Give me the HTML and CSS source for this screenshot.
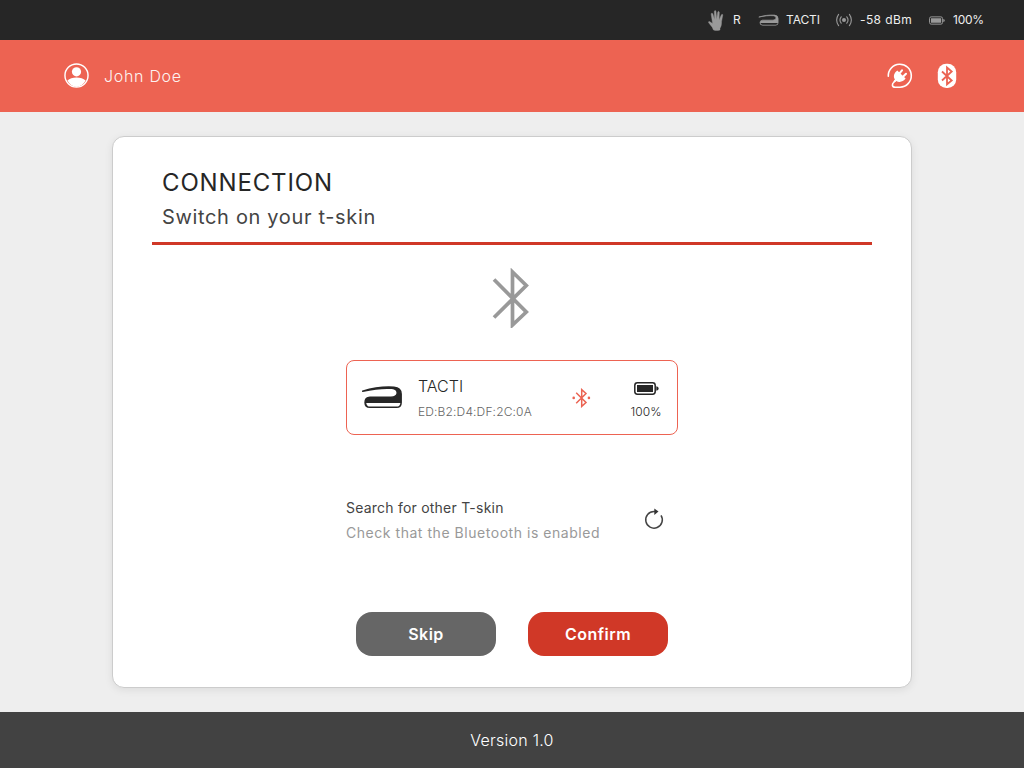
FILE: index.html
```
<!DOCTYPE html>
<html lang="en">
<head>
<meta charset="utf-8">
<title>Connection</title>
<link rel="stylesheet" href="styles.css">
</head>
<body>
<svg class="symbols" aria-hidden="true">
  <symbol id="device" viewBox="0 0 42 24">
    <path d="M1.600 6.200C12 3 23 1.500 33 2.200Q40.200 2.800 40.200 9V17.500Q40.200 22.300 35.500 22.300H9Q4 22.300 4 17.500Q4 12.500 9 12.300H30Q35.800 12 36.200 8Q36.200 4 31 3.400C22 2.600 12 4 1.600 6.200Z" fill="currentColor" stroke="currentColor" stroke-width="1.400" stroke-linejoin="round"/>
    <path class="device-base" d="M5.200 17.900H39.400Q39 21.500 35.500 21.500H9Q5.800 21.500 5.200 17.900Z"/>
  </symbol>
  <symbol id="battery" viewBox="0 0 25 13">
    <rect x=".8" y=".8" width="20.400" height="11.400" rx="2.600" fill="none" stroke="currentColor" stroke-width="1.500"/>
    <path d="M3 3H19V10H3ZM22.300 4.200Q24.700 4.600 24.700 6.500T22.300 8.800Z" fill="currentColor"/>
  </symbol>
</svg>
<div class="app">
  <div class="status">
    <div class="status-item hand">
      <svg width="16" height="21" viewBox="0 0 16 21"><path d="M5.500 20Q4.700 17.200 2.600 15.200L.5 12.600Q.2 11.400 1.500 11.500L4.600 13.500L3.200 4.500Q3 3.300 3.800 3.200T4.900 4.100L6.500 9.600L6.300 1.800Q6.400.6 7.200.6T8 1.700L8.700 9.300L9.700 2.300Q10 1.200 10.700 1.400T11.300 2.600L11.100 9.900L13.300 5Q13.800 4 14.500 4.400T14.700 5.600L13.600 11.300Q13.600 16.500 12 18.200V20Q8.500 21 5.500 20Z" fill="currentColor" stroke="currentColor" stroke-width=".4"/></svg>
      <span class="label">R</span>
    </div>
    <div class="status-item tacti">
      <svg width="21" height="12"><use href="#device"/></svg>
      <span class="label">TACTI</span>
    </div>
    <div class="status-item signal">
      <svg width="16" height="14" viewBox="0 0 16 14" fill="none" stroke="currentColor" stroke-width="1.100" stroke-linecap="round"><circle cx="8" cy="7" r="2" fill="currentColor" stroke="none"/><path d="M5.200 3.800Q2.700 7 5.200 10.200M10.800 3.800Q13.300 7 10.800 10.200M2.600 1.400Q-1.300 7 2.600 12.600M13.400 1.400Q17.300 7 13.400 12.600"/></svg>
      <span class="label">-58 dBm</span>
    </div>
    <div class="status-item charge">
      <svg width="16" height="9"><use href="#battery"/></svg>
      <span class="label">100%</span>
    </div>
  </div>
  <header class="header">
    <svg class="avatar" width="25" height="25" viewBox="0 0 26 26"><circle cx="13" cy="13" r="12" fill="none" stroke="#fff" stroke-width="1.500"/><circle cx="13" cy="9.200" r="4.800" fill="#fff"/><path d="M3.500 18.300Q7 15.200 13 15.200T22.500 18.300Q19 24.800 13 24.800T3.500 18.300Z" fill="#fff"/></svg>
    <span class="user">John Doe</span>
    <svg class="plug" width="26" height="26" viewBox="0 0 26 26"><path d="M1.300 13.300A11.500 11.500 0 1 1 13 24.200H8.200C4.700 24.200 4.700 21 7 19L9 17" fill="none" stroke="#fff" stroke-width="1.600" stroke-linecap="round"/><path d="M10.300 7.500L18.600 15.600C16 19.200 12 19.700 9.200 17.900L7.600 19.500L6.400 18.200L7.900 16.500C6 13.500 6.900 10 10.300 7.500Z" fill="#fff"/><path d="M12.500 10.300L15 7.300M16 13.800L19 10.800" stroke="#fff" stroke-width="2.100" stroke-linecap="round"/></svg>
    <svg width="20" height="26" viewBox="0 0 20 26"><rect x=".8" y=".8" width="18.400" height="24.300" rx="8.500" fill="#fff"/><path d="M5 8.500L14.700 17.500L10 21.300V4.500L14.700 8.500L5 17.500" fill="none" stroke="#eb6352" stroke-width="1.800"/></svg>
  </header>
  <main class="main">
    <section class="card">
      <div class="heading">
        <h1 class="title">CONNECTION</h1>
        <p class="subtitle">Switch on your t-skin</p>
      </div>
      <svg class="bluetooth" width="38" height="60" viewBox="0 0 38 60"><path d="M2 11.500L34.300 44L20.500 57V4L34.300 17.500L2 49.500" fill="none" stroke="#999" stroke-width="3.700"/></svg>
      <div class="device-row">
        <svg class="device-icon" width="42" height="24"><use href="#device"/></svg>
        <div class="device-info">
          <span class="device-name">TACTI</span>
          <span class="device-id">ED:B2:D4:DF:2C:0A</span>
        </div>
        <svg class="paired" width="19" height="20" viewBox="0 0 19 20"><path d="M4.200 4.800L14 14.500L9.700 18.400V1.600L14 5.500L4.200 15.200" fill="none" stroke="#eb6352" stroke-width="1.500"/><circle cx="1.700" cy="9.900" r="1.300" fill="#eb6352"/><circle cx="16.900" cy="9.900" r="1.300" fill="#eb6352"/></svg>
        <div class="level">
          <svg width="25" height="13"><use href="#battery"/></svg>
          <span class="level-text">100%</span>
        </div>
      </div>
      <div class="search">
        <div class="search-text">
          <span class="search-title">Search for other T-skin</span>
          <span class="search-hint">Check that the Bluetooth is enabled</span>
        </div>
        <svg class="refresh" width="20" height="22" viewBox="0 0 20 22"><path d="M17 7.300A8.300 8.300 0 1 1 10 3.500H12" fill="none" stroke="#444" stroke-width="1.500"/><path d="M10.300.4L14.500 3.500L10.300 6.900Z" fill="#333"/></svg>
      </div>
      <div class="actions">
        <button class="button skip"><span>Skip</span></button>
        <button class="button confirm"><span>Confirm</span></button>
      </div>
    </section>
  </main>
  <footer class="footer"><span class="version">Version 1.0</span></footer>
</div>
</body>
</html>
```
FILE: styles.css
```
* { box-sizing: border-box; }
body { margin: 0; font-family: Inter, "Open Sans", sans-serif; }
svg { display: block; flex: none; }
span, h1, p { white-space: nowrap; }
.symbols { position: absolute; width: 0; height: 0; }
.app { width: 1024px; height: 768px; display: flex; flex-direction: column; background: #eee; }
.status { --base: #262626; height: 40px; background: #262626; color: #999; display: flex; align-items: center; padding-left: 708px; }
.status-item { display: flex; align-items: center; height: 40px; }
.label { color: #eee; font-size: 12px; line-height: 16px; }
.hand { width: 50px; gap: 9px; }
.tacti { width: 78px; gap: 7px; }
.signal { width: 93px; gap: 8px; }
.charge { gap: 8px; }
.device-base { fill: var(--base, #fff); }
.tacti .label { letter-spacing: -0.1px; }
.signal .label { letter-spacing: 0.4px; }
.charge .label { letter-spacing: -0.25px; }
.header { height: 72px; background: #ed6352; display: flex; align-items: center; padding: 0 67px 0 64px; }
.avatar { margin-top: -1px; }
.user { margin-left: 15px; color: #fff; font-size: 16px; font-weight: 300; letter-spacing: 0.7px; flex: 1; opacity: .92; }
.plug { margin-right: 24px; }
.main { height: 600px; padding: 24px 112px; }
.card { width: 800px; height: 552px; border: 1px solid #ccc; border-radius: 12px; background: #fff; box-shadow: 0 2px 8px rgba(0,0,0,.08); display: flex; flex-direction: column; align-items: center; }
.heading { width: 720px; height: 108px; border-bottom: 3px solid #d03827; padding: 30px 10px 0; }
.title { margin: 0; color: #262626; font-size: 24px; line-height: 32px; font-weight: 400; letter-spacing: .85px; }
.subtitle { margin: 4px 0 0; color: #444; font-size: 20px; line-height: 28px; font-weight: 400; letter-spacing: .66px; }
.bluetooth { margin: 23px 0 0 -2px; }
.device-row { width: 332px; height: 75px; margin-top: 32px; border: 1px solid #ed6352; border-radius: 8px; display: flex; align-items: center; color: #262626; }
.device-icon { margin-left: 14px; margin-top: -1px; }
.device-info { margin-left: 15px; width: 154px; display: flex; flex-direction: column; gap: 8px; padding-top: 1px; }
.device-name { font-size: 16px; font-weight: 300; line-height: 20px; }
.device-id { font-size: 12px; font-weight: 300; line-height: 16px; color: #666; letter-spacing: .15px; }
.level { width: 32px; margin-left: 39px; height: 73px; padding-top: 21px; display: flex; flex-direction: column; align-items: center; gap: 9px; }
.level-text { font-size: 12px; line-height: 16px; font-weight: 300; }
.search { width: 332px; height: 50px; margin-top: 60px; padding-right: 14px; display: flex; align-items: center; justify-content: space-between; }
.search-text { display: flex; flex-direction: column; gap: 5px; font-size: 14px; line-height: 20px; }
.search-title { color: #444; letter-spacing: .22px; }
.search-hint { color: #999; letter-spacing: .54px; }
.refresh { margin-top: -3px; }
.actions { display: flex; gap: 32px; margin-top: 67px; }
.button { width: 140px; height: 44px; border: 0; border-radius: 16px; padding: 0; color: #fff; font: 600 16px/20px Inter, sans-serif; letter-spacing: .5px; }
.skip { background: #666; }
.confirm { background: #d03827; }
.footer { height: 56px; background: #424242; color: #fff; display: flex; align-items: center; justify-content: center; font-size: 16px; font-weight: 300; letter-spacing: .25px; }
```
